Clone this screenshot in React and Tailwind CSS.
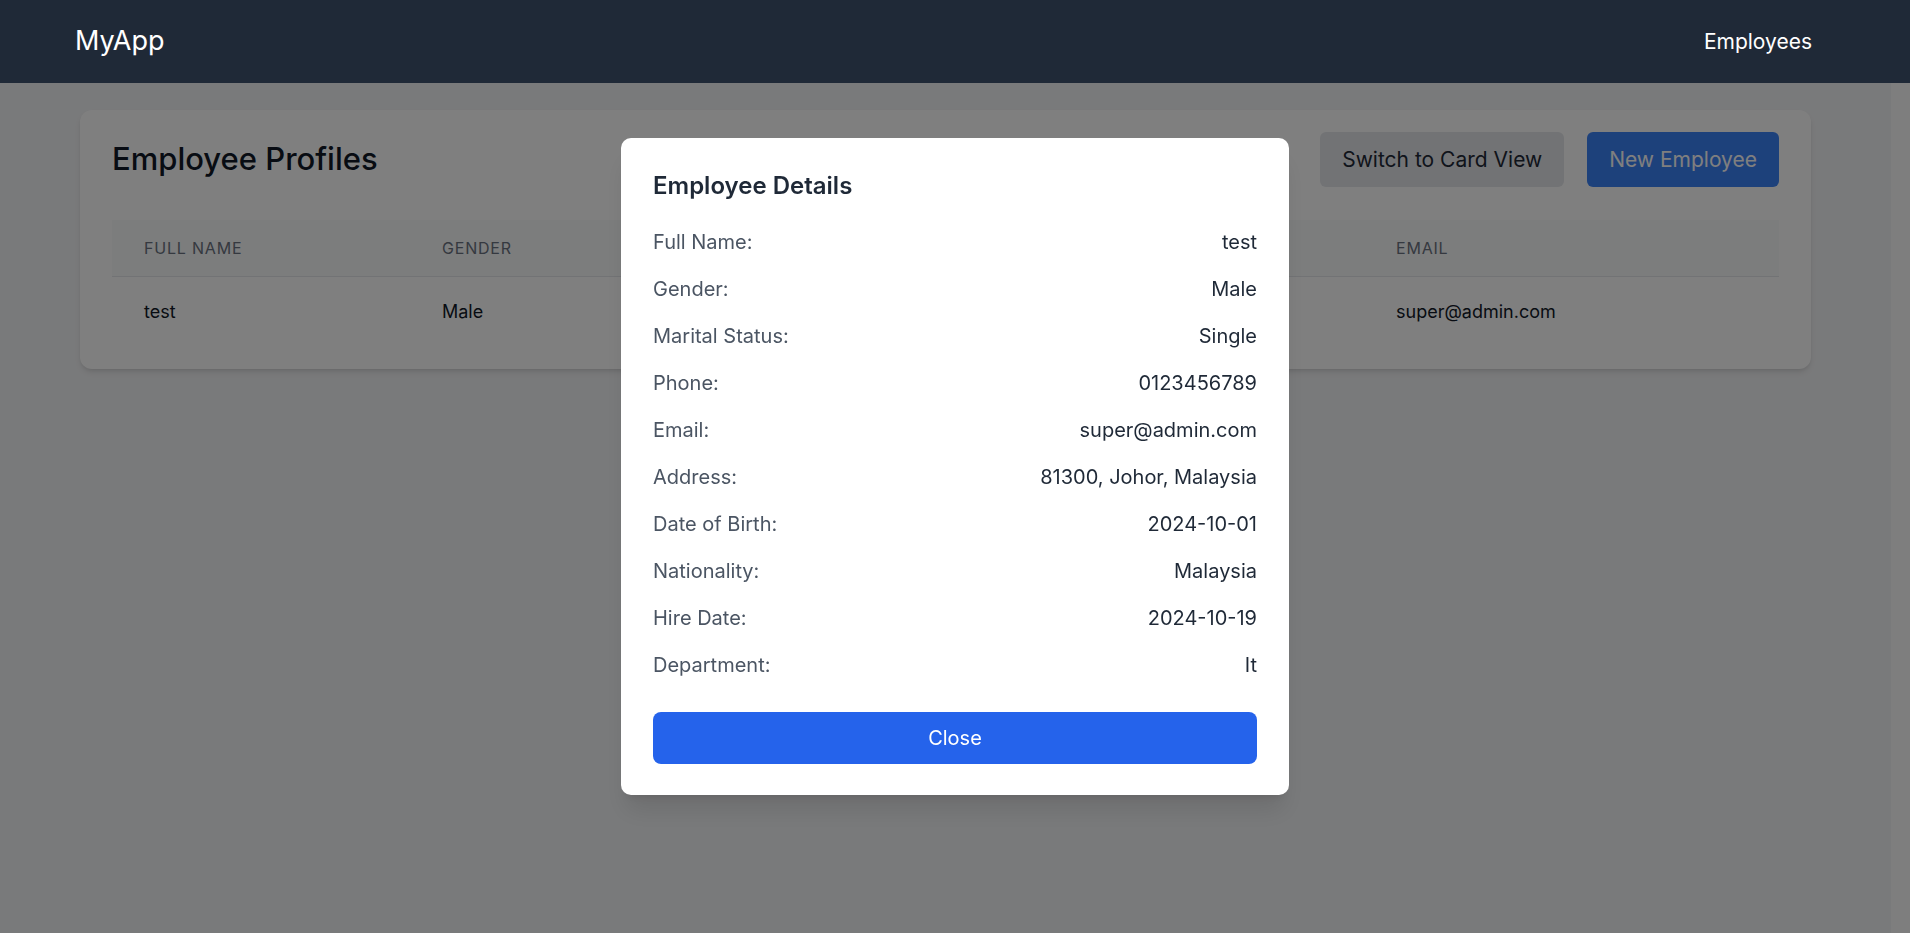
import React, { useState } from 'react';

const employee = {
  fullName: 'test',
  gender: 'Male',
  maritalStatus: 'Single',
  phone: '0123456789',
  email: 'super@admin.com',
  address: '81300, Johor, Malaysia',
  dateOfBirth: '2024-10-01',
  nationality: 'Malaysia',
  hireDate: '2024-10-19',
  department: 'It',
};

const details = [
  ['Full Name:', employee.fullName],
  ['Gender:', employee.gender],
  ['Marital Status:', employee.maritalStatus],
  ['Phone:', employee.phone],
  ['Email:', employee.email],
  ['Address:', employee.address],
  ['Date of Birth:', employee.dateOfBirth],
  ['Nationality:', employee.nationality],
  ['Hire Date:', employee.hireDate],
  ['Department:', employee.department],
];

const App = () => {
  const [open, setOpen] = useState(true);

  return (
    <div className="min-h-screen bg-[#f3f4f6] font-['Inter',sans-serif] flex flex-col">
      {/* Navbar */}
      <nav className="relative z-50 h-[83px] bg-[#1f2937] flex items-center justify-between pl-[75px] pr-[98px] text-white shrink-0">
        <span className="text-[27px]">MyApp</span>
        <a href="#" className="text-[21px]">Employees</a>
      </nav>

      <div className="flex flex-1">
        <main className="flex-1 px-20 pt-[27px]">
          <div className="bg-white rounded-xl shadow-md px-8 py-[22px]">
            <div className="flex items-center justify-between mb-[33px]">
              <h1 className="text-[31px] font-medium text-[#111827]">Employee Profiles</h1>
              <div className="flex gap-[23px]">
                <button className="h-[55px] px-[22px] bg-[#e5e7eb] text-[#1f2937] text-[21px] rounded-md">Switch to Card View</button>
                <button className="h-[55px] px-[22px] bg-[#3b82f6] text-white text-[21px] rounded-md">New Employee</button>
              </div>
            </div>

            <table className="w-full table-fixed text-left">
              <colgroup>
                <col className="w-[298px]" />
                <col className="w-[298px]" />
                <col className="w-[328px]" />
                <col className="w-[328px]" />
                <col />
              </colgroup>
              <thead className="bg-[#f9fafb] border-b border-[#e5e7eb]">
                <tr className="h-[56px] text-base uppercase tracking-wider text-[#6b7280]">
                  <th className="px-8 font-normal">Full Name</th>
                  <th className="px-8 font-normal">Gender</th>
                  <th className="px-8 font-normal">Marital Status</th>
                  <th className="px-8 font-normal">Phone</th>
                  <th className="px-8 font-normal">Email</th>
                </tr>
              </thead>
              <tbody>
                <tr className="h-[71px] text-lg text-[#111827]">
                  <td className="px-8">{employee.fullName}</td>
                  <td className="px-8">{employee.gender}</td>
                  <td className="px-8">{employee.maritalStatus}</td>
                  <td className="px-8">{employee.phone}</td>
                  <td className="px-8">{employee.email}</td>
                </tr>
              </tbody>
            </table>
          </div>
        </main>
        <div className="w-[19px] bg-[#fdfdfd] shrink-0"></div>
      </div>

      {open && (
        <div className="fixed inset-0 z-40 bg-black/50 flex items-center justify-center">
          <div className="w-[668px] bg-white rounded-[10px] shadow-xl px-8 pt-8 pb-[31px]">
            <h2 className="text-2xl font-semibold text-[#1f2937] mb-[26px]">Employee Details</h2>
            <div className="flex flex-col gap-[19px]">
              {details.map(([label, value]) => (
                <div key={label} className="flex justify-between text-xl leading-7">
                  <span className="text-[#4b5563]">{label}</span>
                  <span className="text-[#1f2937]">{value}</span>
                </div>
              ))}
            </div>
            <button
              onClick={() => setOpen(false)}
              className="mt-[33px] w-full h-[52px] bg-[#2563eb] text-white text-xl rounded-lg"
            >
              Close
            </button>
          </div>
        </div>
      )}
    </div>
  );
};

export default App;
